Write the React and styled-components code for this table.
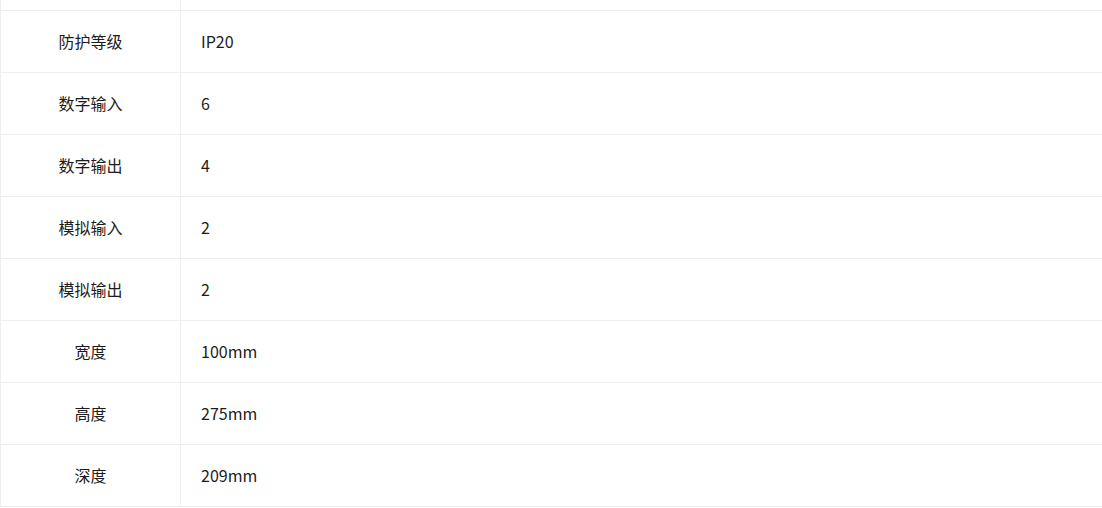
import React from "react";
import styled, { createGlobalStyle } from "styled-components";

const Global = createGlobalStyle`
  html, body { margin: 0; padding: 0; background: #fff; }
  body { font-family: "Noto Sans CJK SC", "Noto Sans", sans-serif; overflow: hidden; }
`;

const Wrap = styled.div`
  margin-top: -52px;
  width: 1102px;
`;

const Table = styled.table`
  width: 1102px;
  border-collapse: collapse;
  table-layout: fixed;
  color: #1c1c1c;
  font-size: 16px;
`;

const Row = styled.tr`
  height: 62px;
`;

const Label = styled.td`
  width: 179px;
  border: 1px solid #eeeeee;
  text-align: center;
  vertical-align: middle;
  padding: 0 0 1px;
  height: 60px;
`;

const Value = styled.td`
  border-top: 1px solid #eeeeee;
  border-bottom: 1px solid #eeeeee;
  padding: 0 0 1px 20px;
  height: 60px;
  text-align: left;
  vertical-align: middle;
`;

const rows = [
  ["", ""],
  ["防护等级", "IP20"],
  ["数字输入", "6"],
  ["数字输出", "4"],
  ["模拟输入", "2"],
  ["模拟输出", "2"],
  ["宽度", "100mm"],
  ["高度", "275mm"],
  ["深度", "209mm"],
];

export default function App() {
  return (
    <>
      <Global />
      <Wrap>
        <Table>
          <tbody>
            {rows.map(([k, v], i) => (
              <Row key={i}>
                <Label>{k}</Label>
                <Value>{v}</Value>
              </Row>
            ))}
          </tbody>
        </Table>
      </Wrap>
    </>
  );
}
